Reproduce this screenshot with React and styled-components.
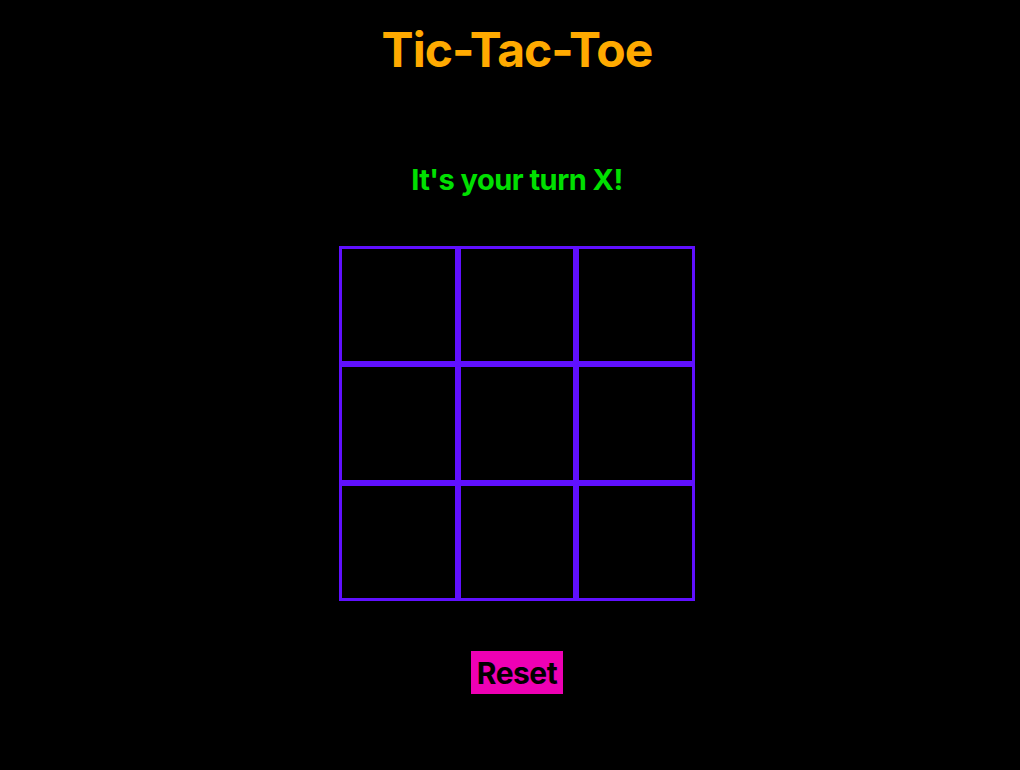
import React, { useState } from "react";
import styled, { createGlobalStyle } from "styled-components";

const GlobalStyle = createGlobalStyle`
  body {
    margin: 0;
    background: #000;
    font-family: Inter, "Liberation Sans", sans-serif;
  }
`;

const App = () => {
  const [cells, setCells] = useState(Array(9).fill(""));
  const [turn, setTurn] = useState("X");

  const play = (i) => {
    if (cells[i]) return;
    const next = [...cells];
    next[i] = turn;
    setCells(next);
    setTurn(turn === "X" ? "O" : "X");
  };

  const reset = () => {
    setCells(Array(9).fill(""));
    setTurn("X");
  };

  return (
    <Page>
      <GlobalStyle />
      <Title>Tic-Tac-Toe</Title>
      <Status>It's your turn {turn}!</Status>
      <Board>
        {cells.map((value, i) => (
          <Cell key={i} onClick={() => play(i)}>
            {value}
          </Cell>
        ))}
      </Board>
      <ResetButton onClick={reset}>Reset</ResetButton>
    </Page>
  );
};

const Page = styled.div`
  min-height: 100vh;
  box-sizing: border-box;
  padding-left: 14px;
  display: flex;
  flex-direction: column;
  align-items: center;
  background: #000;
`;

const Title = styled.h1`
  margin: 20px 0 0;
  color: #ffaa00;
  font-size: 48px;
  font-weight: 700;
  letter-spacing: -1px;
  line-height: 60px;
`;

const Status = styled.h2`
  margin: 80px 0 0;
  color: #00e000;
  font-size: 29px;
  font-weight: 700;
  letter-spacing: -0.5px;
  line-height: 40px;
`;

const Board = styled.div`
  margin-top: 46px;
  display: grid;
  grid-template-columns: repeat(3, 1fr);
  width: 356px;
  height: 355px;
`;

const Cell = styled.div`
  box-sizing: border-box;
  border: 3px solid #6010ff;
  display: flex;
  align-items: center;
  justify-content: center;
  color: #fff;
  font-size: 60px;
  font-weight: 700;
  cursor: pointer;
`;

const ResetButton = styled.button`
  margin-top: 50px;
  height: 43px;
  padding: 0 6px;
  border: none;
  background: #ee00b4;
  color: #000;
  font-family: Inter, "Liberation Sans", sans-serif;
  font-size: 30px;
  font-weight: 700;
  letter-spacing: -0.5px;
  cursor: pointer;
`;

export default App;
